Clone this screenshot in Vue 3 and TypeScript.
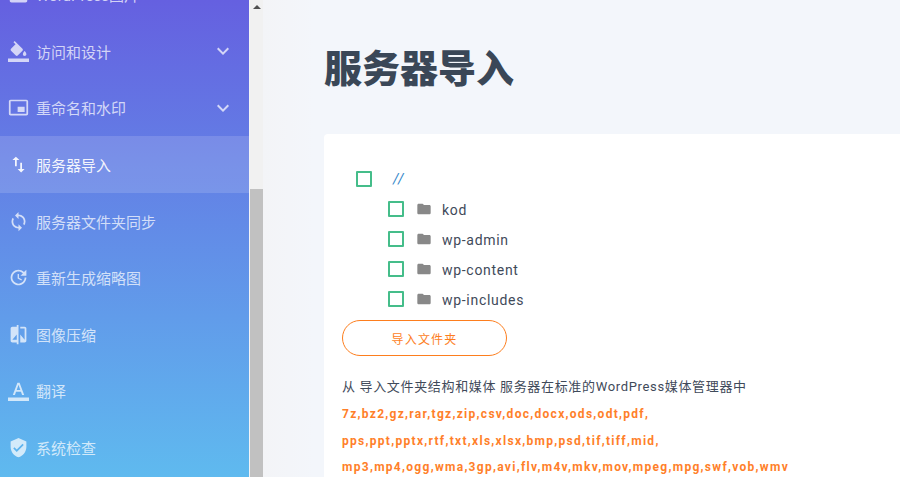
<script setup lang="ts">
interface Item { label: string; d: string; chevron?: boolean; active?: boolean }
const items: Item[] = [
  { label: 'WordPress图片', d: 'M4 2h16c1.1 0 2 .9 2 2v15c0 1.1-.9 2-2 2H4c-1.1 0-2-.9-2-2V4c0-1.1.9-2 2-2z' },
  { label: '访问和设计', chevron: true, d: 'M16.56 8.94L7.62 0 6.21 1.41l2.38 2.38-5.15 5.15c-.59.59-.59 1.54 0 2.12l5.5 5.5c.29.29.68.44 1.06.44s.77-.15 1.06-.44l5.5-5.5c.59-.58.59-1.53 0-2.12zM19 11.5s-2 2.17-2 3.5c0 1.1.9 2 2 2s2-.9 2-2c0-1.33-2-3.5-2-3.5zM0 20h24v4H0z' },
  { label: '重命名和水印', chevron: true, d: 'M19 11h-8v6h8v-6zm4 8V4.98C23 3.88 22.1 3 21 3H3c-1.1 0-2 .88-2 1.98V19c0 1.1.9 2 2 2h18c1.1 0 2-.9 2-2zm-2 .02H3V4.97h18v14.05z' },
  { label: '服务器导入', active: true, d: 'M9 3L5 6.99h3V14h2V6.99h3L9 3zm7 14.01V10h-2v7.01h-3L15 21l4-3.99h-3z' },
  { label: '服务器文件夹同步', d: 'M12 4V1L8 5l4 4V6c3.31 0 6 2.69 6 6 0 1.01-.25 1.97-.7 2.8l1.46 1.46C19.54 15.03 20 13.57 20 12c0-4.42-3.58-8-8-8zm0 14c-3.31 0-6-2.69-6-6 0-1.01.25-1.97.7-2.8L5.24 7.74C4.46 8.97 4 10.43 4 12c0 4.42 3.58 8 8 8v3l4-4-4-4v3z' },
  { label: '重新生成缩略图', d: 'M21 10.12h-6.78l2.74-2.82c-2.73-2.7-7.15-2.8-9.88-.1-2.73 2.71-2.73 7.08 0 9.79s7.15 2.71 9.88 0C18.32 15.65 19 14.08 19 12.1h2c0 1.98-.88 4.55-2.64 6.29-3.51 3.48-9.21 3.48-12.72 0-3.5-3.47-3.53-9.11-.02-12.58s9.14-3.47 12.65 0L21 3v7.12zM12.5 8v4.25l3.5 2.08-.72 1.21L11 13V8h1.5z' },
  { label: '图像压缩', d: 'M10 3H5c-1.1 0-2 .9-2 2v14c0 1.1.9 2 2 2h5v2h2V1h-2v2zm0 15H5l5-6v6zm9-15h-5v2h5v13l-5-6v9h5c1.1 0 2-.9 2-2V5c0-1.1-.9-2-2-2z' },
  { label: '翻译', d: 'M0 20h24v4H0v-4zm5.49-3h2.42l1.27-3.58h5.65L16.09 17h2.42L13.25 3h-2.5L5.49 17zm4.42-5.61l2.03-5.79h.12l2.03 5.79H9.91z' },
  { label: '系统检查', d: 'M12 1L3 5v6c0 5.55 3.84 10.74 9 12 5.16-1.26 9-6.45 9-12V5l-9-4zm-2 16l-4-4 1.41-1.41L10 14.17l6.59-6.59L18 9l-8 8z' },
]
const folders: string[] = ['kod', 'wp-admin', 'wp-content', 'wp-includes']
const extLines: string[] = [
  '7z,bz2,gz,rar,tgz,zip,csv,doc,docx,ods,odt,pdf,',
  'pps,ppt,pptx,rtf,txt,xls,xlsx,bmp,psd,tif,tiff,mid,',
  'mp3,mp4,ogg,wma,3gp,avi,flv,m4v,mkv,mov,mpeg,mpg,swf,vob,wmv',
]
</script>

<template>
  <div class="page">
    <aside class="sidebar">
      <ul class="menu">
        <li v-for="item in items" :key="item.label" class="menu-item" :class="{ active: item.active }">
          <svg class="menu-icon" viewBox="0 0 24 24" aria-hidden="true"><path :d="item.d" /></svg>
          <span class="menu-label">{{ item.label }}</span>
          <svg v-if="item.chevron" class="chevron" viewBox="0 0 24 24" aria-hidden="true"><path d="M16.59 8.59L12 13.17 7.41 8.59 6 10l6 6 6-6z" /></svg>
        </li>
      </ul>
    </aside>
    <div class="scrollbar">
      <div class="arrow"></div>
      <div class="thumb"></div>
    </div>
    <main class="main">
      <h1 class="title">服务器导入</h1>
      <section class="card">
        <div class="root-row">
          <span class="check"></span>
          <span class="root-name">//</span>
        </div>
        <ul class="tree">
          <li v-for="f in folders" :key="f" class="tree-row">
            <span class="check"></span>
            <svg class="folder" viewBox="0 0 24 24" aria-hidden="true"><path d="M10 4H4c-1.1 0-1.99.9-1.99 2L2 18c0 1.1.9 2 2 2h16c1.1 0 2-.9 2-2V8c0-1.1-.9-2-2-2h-8l-2-2z" /></svg>
            <span class="tree-name">{{ f }}</span>
          </li>
        </ul>
        <button class="import-btn" type="button">导入文件夹</button>
        <p class="desc">从 导入文件夹结构和媒体 服务器在标准的WordPress媒体管理器中</p>
        <p v-for="line in extLines" :key="line" class="ext">{{ line }}</p>
      </section>
    </main>
  </div>
</template>

<style scoped>
.page {
  display: flex;
  width: 900px;
  height: 477px;
  overflow: hidden;
  background: linear-gradient(90deg, #f3f4f7 264px, #f3f6fb 314px);
  font-family: Roboto, "Noto Sans CJK SC", sans-serif;
}
.sidebar {
  flex: 0 0 249px;
  height: 477px;
  overflow: hidden;
  background: linear-gradient(180deg, #6560e0 0%, #5fbaef 100%);
}
.menu {
  list-style: none;
  margin: -33.5px 0 0;
  padding: 0;
}
.menu-item {
  display: flex;
  align-items: center;
  height: 56.6px;
  padding: 0 14px 0 8px;
  box-sizing: border-box;
  color: rgba(255, 255, 255, 0.72);
  font-size: 15px;
}
.menu-item.active {
  background: rgba(255, 255, 255, 0.14);
  color: rgba(255, 255, 255, 0.92);
}
.menu-icon {
  flex: 0 0 21px;
  width: 21px;
  height: 21px;
  fill: currentColor;
}
.menu-label {
  margin-left: 7px;
  white-space: nowrap;
}
.chevron {
  width: 24px;
  height: 24px;
  margin-left: auto;
  fill: currentColor;
}
.scrollbar {
  display: flex;
  flex-direction: column;
  flex: 0 0 13px;
  height: 477px;
  margin-left: 1px;
  background: #f1f1f1;
}
.arrow {
  width: 0;
  height: 0;
  margin: 5px 0 0 3px;
  border-left: 4px solid transparent;
  border-right: 4px solid transparent;
  border-bottom: 4px solid #505050;
}
.thumb {
  width: 13px;
  height: 288px;
  margin-top: 180px;
  background: #c1c1c1;
}
.main {
  flex: 1;
  min-width: 0;
  padding: 0 0 0 61px;
}
.title {
  margin: 42px 0 0;
  font-size: 38px;
  line-height: 54px;
  font-weight: 900;
  color: #3a4757;
  white-space: nowrap;
}
.card {
  width: 640px;
  height: 400px;
  margin-top: 38px;
  padding: 37px 0 0 19px;
  box-sizing: border-box;
  background: #fff;
  border-radius: 4px;
}
.root-row {
  display: flex;
  align-items: center;
  height: 16px;
  padding-left: 13px;
}
.root-name {
  margin-left: 21px;
  font-size: 14px;
  font-style: italic;
  color: #2f86c9;
  letter-spacing: 1px;
}
.check {
  flex: 0 0 16px;
  width: 16px;
  height: 16px;
  box-sizing: border-box;
  border: 2px solid #45bd8a;
  border-radius: 1px;
}
.tree {
  list-style: none;
  margin: 0;
  padding: 7px 0 0 45px;
}
.tree-row {
  display: flex;
  align-items: center;
  height: 30px;
}
.folder {
  width: 16px;
  height: 16px;
  margin-left: 12px;
  fill: #888;
}
.tree-name {
  margin-left: 10px;
  padding-top: 1px;
  font-size: 14px;
  letter-spacing: 0.7px;
  color: #3f4a5a;
}
.import-btn {
  display: block;
  width: 165px;
  height: 36px;
  margin: 6px 0 0 -1px;
  padding: 0;
  background: #fff;
  border: 1px solid #fd7e1e;
  border-radius: 18px;
  color: #fd7e1e;
  font: inherit;
  font-size: 12px;
  letter-spacing: 1.2px;
}
.desc {
  margin: 21px 0 0 -1px;
  font-size: 13px;
  line-height: 20px;
  letter-spacing: 0.66px;
  color: #3f4a5a;
  white-space: nowrap;
}
.ext {
  margin: 0 0 0 -1px;
  font-size: 12px;
  line-height: 26.6px;
  font-weight: 700;
  letter-spacing: 1.29px;
  color: #ff7f2a;
  white-space: nowrap;
}
.desc + .ext {
  margin-top: 4px;
}
</style>
